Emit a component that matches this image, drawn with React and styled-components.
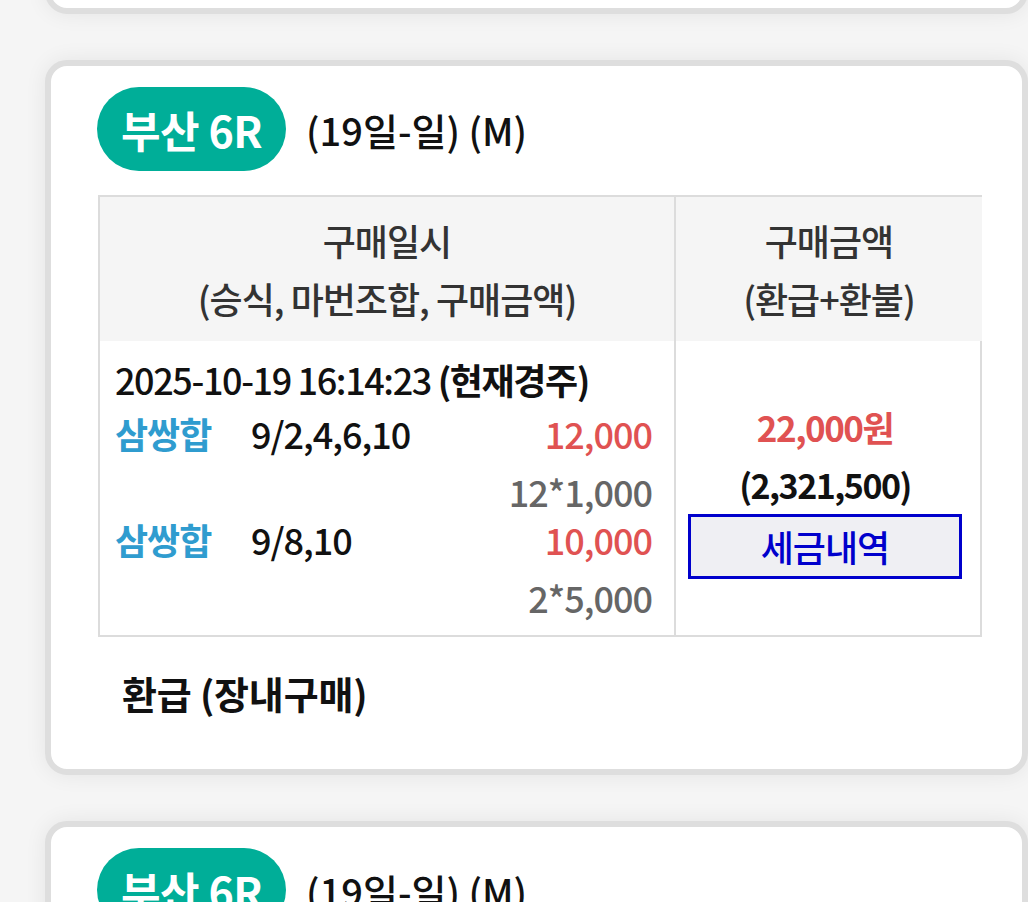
import React from 'react';
import styled, { createGlobalStyle } from 'styled-components';

const GlobalStyle = createGlobalStyle`
    body {
        margin: 0;
        background: #f5f5f5;
        font-family: "Noto Sans CJK KR", "Noto Sans", sans-serif;
        color: #111;
    }
`;

const List = styled.div`
    margin-top: -701px;
    padding-left: 45px;
    display: flex;
    flex-direction: column;
    gap: 46px;
    width: 983px;
`;

const Card = styled.div`
    box-sizing: border-box;
    width: 983px;
    background: #fff;
    border: 6px solid #dedede;
    border-radius: 22px;
    box-shadow: 0 0 22px rgba(0, 0, 0, 0.07);
    padding: 21px 40px 56px 46px;
`;

const Head = styled.div`
    display: flex;
    align-items: center;
    gap: 20px;
`;

const Badge = styled.div`
    height: 84px;
    padding: 0 24px;
    border-radius: 42px;
    background: #00ae98;
    color: #fff;
    font-size: 43px;
    font-weight: 700;
    letter-spacing: -0.5px;
    display: flex;
    align-items: center;
`;

const RaceInfo = styled.div`
    font-size: 38px;
    font-weight: 500;
    color: #111;
`;

const Table = styled.div`
    margin-top: 24px;
    margin-left: 1px;
    display: grid;
    grid-template-columns: 574px 308px;
    border: 2px solid #dcdcdc;
    width: 884px;
    box-sizing: border-box;
`;

const HeadCell = styled.div`
    background: #f5f5f5;
    height: 144px;
    display: flex;
    flex-direction: column;
    justify-content: center;
    align-items: center;
    font-size: 36px;
    font-weight: 500;
    line-height: 58px;
    color: #333;
    letter-spacing: -1px;
    border-left: ${p => (p.$split ? '2px solid #dcdcdc' : 'none')};
`;

const BodyLeft = styled.div`
    padding: 12px 22px 18px 15px;
`;

const BodyRight = styled.div`
    border-left: 2px solid #dcdcdc;
    display: flex;
    flex-direction: column;
    align-items: center;
    justify-content: center;
    padding-right: 8px;
`;

const DateLine = styled.div`
    font-size: 36px;
    font-weight: 500;
    line-height: 52px;
    letter-spacing: -1.4px;
    color: #111;
    b {
        font-weight: 700;
    }
`;

const BetRow = styled.div`
    display: grid;
    grid-template-columns: 136px 1fr auto;
    align-items: center;
    height: 56px;
    font-size: 36px;
    font-weight: 500;
    letter-spacing: -1px;
`;

const Kind = styled.span`
    color: #2f9ccf;
    font-weight: 700;
`;

const Combo = styled.span`
    color: #111;
`;

const Amount = styled.span`
    color: #e05252;
    text-align: right;
`;

const SubRow = styled.div`
    padding-top: 10px;
    height: 40px;
    line-height: 40px;
    font-size: 36px;
    font-weight: 500;
    letter-spacing: -1px;
    text-align: right;
    color: #666;
`;

const Total = styled.div`
    font-size: 35px;
    font-weight: 700;
    color: #e05252;
    letter-spacing: -1.5px;
    line-height: 58px;
`;

const Payout = styled.div`
    font-size: 34px;
    font-weight: 700;
    color: #111;
    letter-spacing: -1.5px;
    line-height: 58px;
`;

const TaxButton = styled.button`
    box-sizing: border-box;
    width: 274px;
    height: 65px;
    border: 3px solid #0000cc;
    background: #efeff3;
    color: #0000cc;
    font-family: inherit;
    font-size: 36px;
    font-weight: 500;
    letter-spacing: -1px;
    padding: 0;
`;

const Footer = styled.div`
    margin-top: 36px;
    padding-left: 25px;
    font-size: 38px;
    line-height: 40px;
    font-weight: 700;
    letter-spacing: -0.2px;
`;

const bets = [
    { kind: '삼쌍합', combo: '9/2,4,6,10', amount: '12,000', detail: '12*1,000' },
    { kind: '삼쌍합', combo: '9/8,10', amount: '10,000', detail: '2*5,000' },
];

function RaceCard() {
    return (
        <Card>
            <Head>
                <Badge>부산 6R</Badge>
                <RaceInfo>(19일-일) (M)</RaceInfo>
            </Head>
            <Table>
                <HeadCell>
                    <div>구매일시</div>
                    <div>(승식, 마번조합, 구매금액)</div>
                </HeadCell>
                <HeadCell $split>
                    <div>구매금액</div>
                    <div>(환급+환불)</div>
                </HeadCell>
                <BodyLeft>
                    <DateLine>2025-10-19 16:14:23 <b>(현재경주)</b></DateLine>
                    {bets.map((b, i) => (
                        <React.Fragment key={i}>
                            <BetRow>
                                <Kind>{b.kind}</Kind>
                                <Combo>{b.combo}</Combo>
                                <Amount>{b.amount}</Amount>
                            </BetRow>
                            <SubRow>{b.detail}</SubRow>
                        </React.Fragment>
                    ))}
                </BodyLeft>
                <BodyRight>
                    <Total>22,000원</Total>
                    <Payout>(2,321,500)</Payout>
                    <TaxButton>세금내역</TaxButton>
                </BodyRight>
            </Table>
            <Footer>환급 (장내구매)</Footer>
        </Card>
    );
}

export default function App() {
    return (
        <>
            <GlobalStyle />
            <List>
                <RaceCard />
                <RaceCard />
                <RaceCard />
            </List>
        </>
    );
}
